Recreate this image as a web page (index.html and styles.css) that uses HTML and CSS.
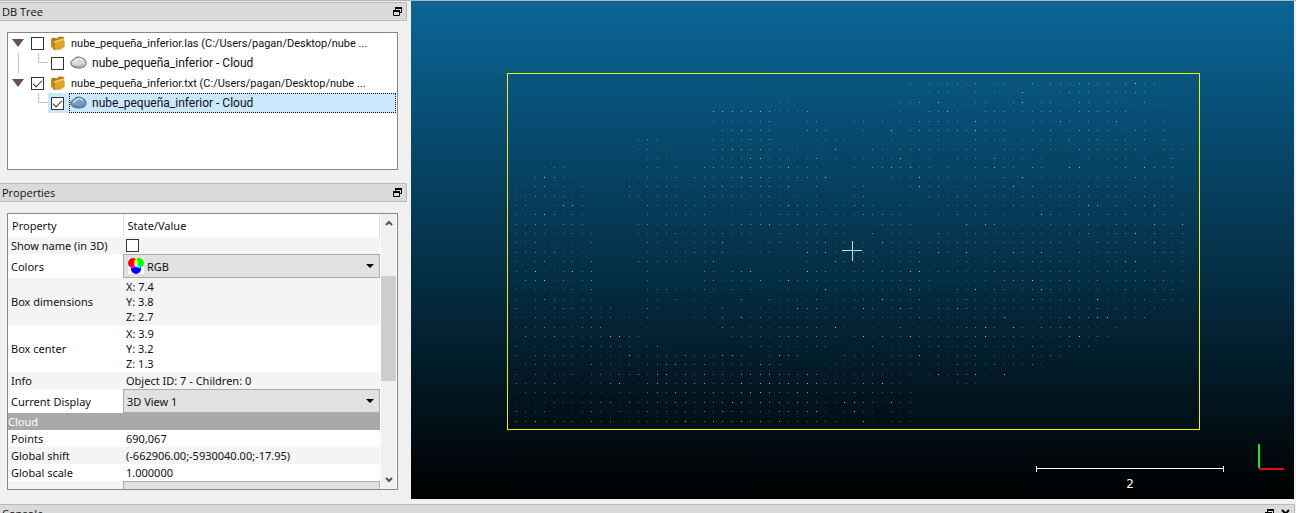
FILE: index.html
```html
<!DOCTYPE html>
<html lang="en">
<head>
<meta charset="utf-8">
<title>Point cloud viewer</title>
<link rel="stylesheet" href="styles.css">
</head>
<body>
<svg class="defs" aria-hidden="true">
  <symbol id="float" viewBox="0 0 9 9"><path d="M2.500 4V1.500H8.500V5.500H6" fill="none" stroke="#000"/><path d="M2 1H9M0 4H7" stroke="#000" stroke-width="2"/><path d="M.5 4V8.500H6.500V4" fill="none" stroke="#000"/></symbol>
  <symbol id="folder" viewBox="0 0 16 16"><path d="M1 4 3 2.500l4 1L9 1.500l5 .5 .5 9-3.500 3-7 1L1 11z" fill="#b57912"/><path d="M4.500 6 14 3l.5 8.500-3.500 3L5 14.500z" fill="#dba52c"/><path d="M1 4l3.500 2 .5 8.500L1 11z" fill="#c48a1a"/><path d="M4.500 6 14 3v2L4.500 8z" fill="#efc760"/></symbol>
  <symbol id="cloud" viewBox="0 0 17 14"><path d="M1 8C0 5 3 4 4 3.500 6 0 10 1 12 2c3 1 4 3 4 5.500 0 3-3 4.500-7 4.500-4 0-7-1-8-4z" fill="currentColor" stroke="#5a626a"/><path d="M3.500 7C4 4.500 7 5 7.500 3c2-1 4 0 5 1.500" fill="none" stroke="#fff" stroke-opacity=".65" stroke-width="1.500"/><path d="M3 9c3 2 8 2 11-.5" fill="none" stroke="#40566a" stroke-opacity=".35" stroke-width="1.500"/></symbol>
  <symbol id="twist" viewBox="0 0 12 8"><path d="M0 0h12L6 8z" fill="#67504f"/></symbol>
  <symbol id="drop" viewBox="0 0 8 4"><path d="M0 0h8L4 4z" fill="#000"/></symbol>
  <symbol id="chev" viewBox="0 0 8 6"><path d="M1 5 4 2l3 3" fill="none" stroke="#555" stroke-width="2"/></symbol>
</svg>
<div class="workspace">
  <aside class="side">
    <section class="dock">
      <header class="bar"><h2>DB Tree</h2><button aria-label="Float DB Tree"><svg class="i9"><use href="#float"/></svg></button></header>
      <div class="frame tree">
        <div class="node"><svg class="twist"><use href="#twist"/></svg><input type="checkbox" id="n1"><svg class="folder"><use href="#folder"/></svg><label for="n1">nube_pequeña_inferior.las (C:/Users/pagan/Desktop/nube ...</label></div>
        <div class="node child"><span class="rail"></span><span class="elbow"></span><div class="pick"><input type="checkbox" id="n2"><div class="name"><svg class="cloud"><use href="#cloud"/></svg><label for="n2">nube_pequeña_inferior - Cloud</label></div></div></div>
        <div class="node"><svg class="twist"><use href="#twist"/></svg><input type="checkbox" id="n3" checked><svg class="folder"><use href="#folder"/></svg><label for="n3">nube_pequeña_inferior.txt (C:/Users/pagan/Desktop/nube ...</label></div>
        <div class="node child"><span class="rail blank"></span><span class="elbow"></span><div class="pick selected"><input type="checkbox" id="n4" checked><div class="name"><svg class="cloud"><use href="#cloud"/></svg><label for="n4">nube_pequeña_inferior - Cloud</label></div></div></div>
      </div>
    </section>
    <section class="dock grow">
      <header class="bar"><h2>Properties</h2><button aria-label="Float Properties"><svg class="i9"><use href="#float"/></svg></button></header>
      <div class="frame props">
        <div class="clip">
          <table>
            <thead><tr><th>Property</th><th>State/Value</th></tr></thead>
            <tbody>
              <tr class="alt"><td><label for="sn">Show name (in 3D)</label></td><td><input type="checkbox" id="sn"></td></tr>
              <tr class="tall"><td><label for="col">Colors</label></td><td class="full"><div class="combo"><svg class="rgb" viewBox="0 0 16 16"><path fill="#fff" d="M0 0h16v16H0z"/><g class="mix"><circle cx="5" cy="5" r="5" fill="#f00"/><circle cx="11" cy="5" r="5" fill="#0f0"/><circle cx="8" cy="11" r="5" fill="#00f"/></g></svg><select id="col"><option>RGB</option></select><svg class="drop"><use href="#drop"/></svg></div></td></tr>
              <tr class="alt"><td>Box dimensions</td><td>X: 7.4<br>Y: 3.8<br>Z: 2.7</td></tr>
              <tr><td>Box center</td><td>X: 3.9<br>Y: 3.2<br>Z: 1.3</td></tr>
              <tr class="alt"><td>Info</td><td>Object ID: 7 - Children: 0</td></tr>
              <tr class="tall"><td><label for="disp">Current Display</label></td><td class="full"><div class="combo"><select id="disp"><option>3D View 1</option></select><svg class="drop"><use href="#drop"/></svg></div></td></tr>
              <tr class="group"><td colspan="2">Cloud</td></tr>
              <tr><td>Points</td><td>690,067</td></tr>
              <tr class="alt"><td>Global shift</td><td>(-662906.00;-5930040.00;-17.95)</td></tr>
              <tr><td>Global scale</td><td>1.000000</td></tr>
              <tr class="alt tall"><td></td><td class="full"><div class="combo"></div></td></tr>
            </tbody>
          </table>
        </div>
        <div class="scroll"><button aria-label="Scroll up"><svg class="chev"><use href="#chev"/></svg></button><div class="track"><div class="thumb"></div></div><button aria-label="Scroll down"><svg class="chev down"><use href="#chev"/></svg></button></div>
      </div>
    </section>
  </aside>
  <main class="view">
    <svg class="scene" viewBox="411 1 883 498" shape-rendering="crispEdges" role="img" aria-label="3D view">
      <g id="points"></g>
      <rect x="507.500" y="73.500" width="692" height="356" class="bounds"/>
      <path d="M842 250.500h20M852.500 241v20" stroke="#cfdbe2"/>
      <path d="M1036.500 468.500h187M1036.500 466v6M1223.500 466v6" fill="none" stroke="#fff"/>
      <text x="1130" y="488" text-anchor="middle" class="unit">2</text>
      <path d="M1259 444v24" stroke="#1fe61f" stroke-width="2"/>
      <path d="M1259 469h25" stroke="#e01010" stroke-width="2"/>
    </svg>
  </main>
</div>
<footer class="console"><header class="bar"><h2>Console</h2><button aria-label="Float Console"><svg class="i9"><use href="#float"/></svg></button><button aria-label="Close Console"><svg class="i9" viewBox="0 0 9 9"><path d="M1 1l7 7M8 1 1 8" stroke="#000" stroke-width="2"/></svg></button></header></footer>
<script src="points.js"></script>
</body>
</html>
```
FILE: styles.css
```css
* { box-sizing: border-box; }
body {
  margin: 0;
  height: 100vh;
  overflow: hidden;
  display: flex;
  flex-direction: column;
  background: #f0f0f0;
  color: #111;
  font: 12px/15px "Open Sans", "Noto Sans", sans-serif;
}
svg { display: block; flex: none; }
.defs { position: absolute; width: 0; height: 0; }
button { border: 0; padding: 0; background: none; display: flex; align-items: center; justify-content: center; }
.workspace { flex: 1; min-height: 0; display: flex; border-top: 1px solid #b4b4b4; }
.side { width: 411px; flex: none; display: flex; flex-direction: column; padding-top: 1px; }
.dock { display: flex; flex-direction: column; }
.grow { flex: 1; min-height: 0; padding-top: 13px; }
.bar {
  display: flex;
  align-items: center;
  gap: 7px;
  height: 19px;
  flex: none;
  margin-right: 4px;
  padding: 0 4px 0 2px;
  background: #dadada;
  border: 1px solid #b9b9b9;
  border-left: 0;
}
.bar h2 { flex: 1; margin: 0; font-size: 11px; font-weight: 400; }
.i9 { width: 9px; height: 9px; }
.frame { margin: 11px 13px 0 7px; border: 1px solid #828790; background: #fff; }
.tree { height: 138px; padding-right: 1px; font-family: Roboto, "Open Sans", sans-serif; }
.node { display: flex; align-items: center; height: 20px; padding-left: 4px; font-size: 11px; }
.twist { width: 12px; height: 8px; margin-right: 7px; }
input[type="checkbox"] {
  appearance: none;
  flex: none;
  width: 13px;
  height: 13px;
  margin: 0;
  border: 1px solid #333;
  background: #fff;
  display: grid;
  place-items: center;
}
input:checked::after {
  content: "";
  width: 8px;
  height: 4px;
  margin-bottom: 2px;
  border: solid #333;
  border-width: 0 0 1px 1px;
  rotate: -45deg;
}
.folder { width: 16px; height: 16px; margin: 0 5px 0 6px; }
.rail { width: 1px; height: 20px; margin-left: 6px; background: #c4c4c4; }
.rail.blank { background: none; }
.elbow { width: 10px; height: 10px; margin: 0 0 10px 19px; border: solid #c4c4c4; border-width: 0 0 1px 1px; }
.pick { flex: 1; display: flex; align-items: center; gap: 5px; height: 20px; padding-left: 3px; font-size: 12px; }
.name { flex: 1; display: flex; align-items: center; gap: 5px; height: 20px; border: 1px dotted transparent; }
.cloud { width: 17px; height: 14px; color: #d3d6da; }
.selected { background: #cce8ff; }
.selected .name { border-color: #111; }
.selected .cloud { color: #6f9fc4; }
.props { flex: 1; min-height: 0; display: flex; margin-bottom: 9px; }
.clip { flex: 1; overflow: hidden; }
table { width: 100%; border-collapse: collapse; table-layout: fixed; font: 11px/15px "Noto Sans", "Open Sans", sans-serif; }
th { height: 23px; padding: 0 4px; text-align: left; font-weight: 400; border-right: 1px solid #e0e0e0; }
th:first-child { width: 115px; }
td { height: 17px; padding: 1px 3px; }
.alt { background: #f4f4f4; }
.tall td { height: 24px; }
td.full { padding: 0; }
.combo { display: flex; align-items: center; height: 24px; padding: 0 5px 0 3px; border: 1px solid #acacac; background: #e1e1e1; }
.combo select { flex: 1; appearance: none; border: 0; padding: 0; background: none; color: inherit; font: inherit; }
.rgb { width: 16px; height: 16px; margin: 0 3px 0 1px; }
.mix { isolation: isolate; }
.mix circle { mix-blend-mode: screen; }
.mix circle:first-child { mix-blend-mode: normal; }
.drop { width: 8px; height: 4px; }
.group { background: #a9a9a9; color: #fff; }
.group td { padding-left: 0; }
.scroll { width: 17px; flex: none; display: flex; flex-direction: column; border: solid #fff; border-width: 0 1px; background: #f0f0f0; }
.scroll button { height: 18px; }
.chev { width: 8px; height: 6px; }
.down { rotate: 180deg; }
.track { flex: 1; padding-top: 44px; }
.thumb { height: 105px; background: #cdcdcd; }
.view { flex: 1; min-width: 0; margin-right: 2px; background: linear-gradient(#0a6697, #000); }
.scene { width: 100%; height: 100%; }
.bounds { fill: none; stroke: #f0f000; stroke-width: 1px; }
.unit { fill: #fff; font: 12px "DejaVu Sans", sans-serif; }
.console { height: 14px; flex: none; padding-top: 5px; overflow: hidden; }
.console .bar { margin-right: 1px; }
```
FILE: points.js
```js
// Occupied column spans for each row of the sampled cloud.
const rows = [
  "42,44-68", "44-68", "28-29,41-69", "21-31,40-69", "21-27,31-32,36-69",
  "22-27,31-33,36-37,40-70", "13-16,21-27,32-35,39-69", "13-16,21-30,32,34-71",
  "13-16,21-32,34-70", "3-5,12,14-17,20-32,36-70", "2-6,12-17,19-33,40-70",
  "0-7,12-17,19-29,32,36-37,41-70", "0-7,12-17,20-30,32,36-37,44-70",
  "0-7,12-38,41-42,46-70", "0-7,12-20,23-37,38-41,45,47-71",
  "0-7,13-35,38-42,48-71", "0-8,13-25,28-35,38-42,45-71", "0-8,14-22,25-71",
  "0-7,14-27,31-71", "0-8,13-18,20-21,29-71", "0-8,14,20-25,28-71",
  "0-8,14,20-26,28-71", "0-8,14-25,28-71", "0-8,14-20,24,27-71",
  "0-10,14-15,20,22,26-69", "0-10,12,14,19-20,22,24-67", "0-11,14,21-35,38-66",
  "0-13,23-34,36-63", "0-16,25-33,36-61", "0-24,27-30,35-58", "0-28,33-56",
  "0-52", "0-42,47-49", "0-42", "0-42", "0-42", "0-42"
];
const noise = (a, b) => {
  const v = Math.sin(a * 127.1 + b * 311.7) * 43758.5453;
  return v - Math.floor(v);
};
let marks = "";
rows.forEach((spans, r) => spans.split(",").forEach(span => {
  const [from, to = from] = span.split("-").map(Number);
  for (let c = from; c <= to; c++) {
    const n = noise(c, r);
    const dark = r < 10 && c > 32 && n < 0.35;
    const bright = (r > 28 && c > 14 && c < 33) || (r > 2 && r < 12 && c > 20 && c < 28);
    const alpha = dark ? 0.5 : n > 0.95 ? 0.85 : (bright ? 0.35 : 0.15) + n * 0.45;
    const x = 516 + Math.round(c * 9.375);
    const y = 83 + Math.round(r * 9.375);
    marks += `<rect x="${x}" y="${y}" width="1" height="1" fill="${dark ? "#001018" : "#d5dfdd"}" fill-opacity="${alpha.toFixed(2)}"/>`;
  }
}));
document.getElementById("points").innerHTML = marks;
```
